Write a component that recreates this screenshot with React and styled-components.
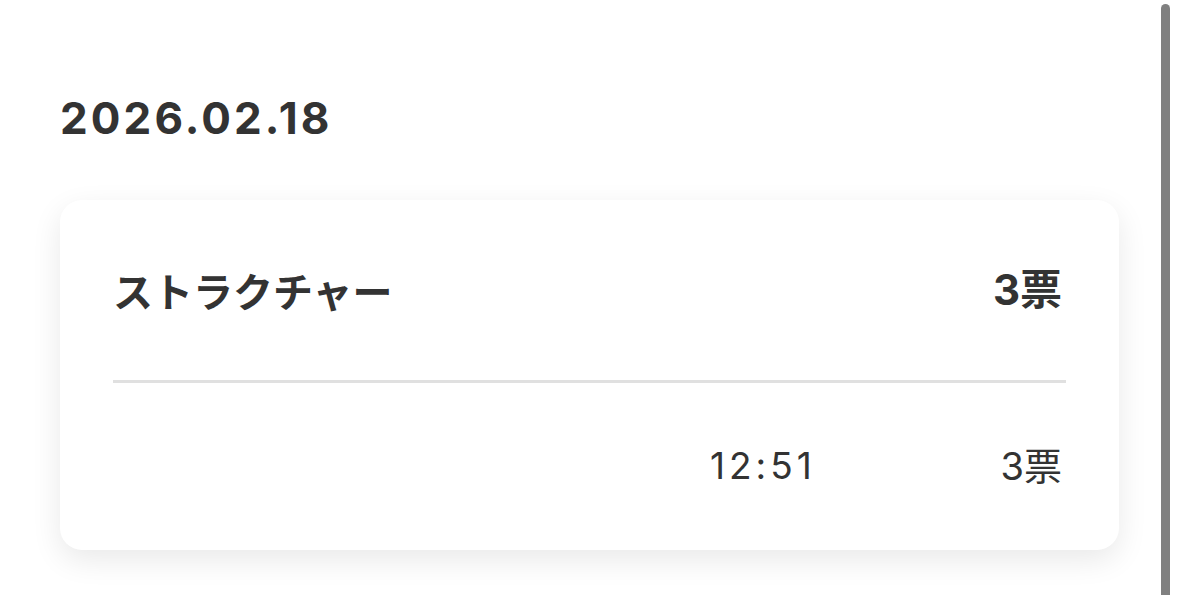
import React from 'react';
import styled, { createGlobalStyle } from 'styled-components';

const GlobalStyle = createGlobalStyle`
    html, body {
        margin: 0;
        padding: 0;
        background: #fff;
        overflow: hidden;
    }
    body {
        font-family: Inter, "Noto Sans CJK JP", sans-serif;
        color: #333;
    }
`;

const rows = [
    { name: '', time: '12:51', votes: '3票' },
];

export default function App() {

    return (
        <>
            <GlobalStyle />
            <Page>
                <DateTitle>2026.02.18</DateTitle>
                <Card>
                    <CardHeader>
                        <Title>ストラクチャー</Title>
                        <Total>3票</Total>
                    </CardHeader>
                    <Divider />
                    {rows.map((r, i) => (
                        <Row key={i}>
                            <span>{r.name}</span>
                            <Time>{r.time}</Time>
                            <Count>{r.votes}</Count>
                        </Row>
                    ))}
                </Card>
            </Page>
            <ScrollThumb />
        </>
    )
}


/* --- STYLES --- */
const Page = styled.div`
    height: 595px;
    box-sizing: border-box;
    padding: 90px 59px 0 60px;
`;
const DateTitle = styled.h2`
    margin: 0 0 54px;
    font-size: 44px;
    line-height: 56px;
    font-weight: 700;
    letter-spacing: 3.1px;
`;
const Card = styled.div`
    background: #fff;
    border-radius: 22px;
    padding: 0 53px;
    box-shadow: 0 10px 30px rgba(0, 0, 0, 0.09);
`;
const CardHeader = styled.div`
    display: flex;
    justify-content: space-between;
    align-items: center;
    padding: 60px 0;
    font-weight: 700;
    font-size: 40px;
    line-height: 60px;
`;
const Title = styled.div`
    font-family: "Noto Sans CJK JP", sans-serif;
`;
const Total = styled.div`
    margin-right: 4px;
    font-size: 42px;
`;
const Divider = styled.div`
    height: 3px;
    background: #e0e0e0;
`;
const Row = styled.div`
    display: grid;
    grid-template-columns: 1fr 196px 160px;
    align-items: center;
    padding: 59px 0 60px;
    font-size: 37px;
    line-height: 48px;
`;
const Time = styled.span`
    letter-spacing: 4px;
`;
const Count = styled.span`
    text-align: right;
    margin-right: 4px;
    font-size: 38px;
`;
const ScrollThumb = styled.div`
    position: fixed;
    top: 4px;
    bottom: -10px;
    right: 8px;
    width: 9px;
    border-radius: 5px;
    background: #808080;
`;
